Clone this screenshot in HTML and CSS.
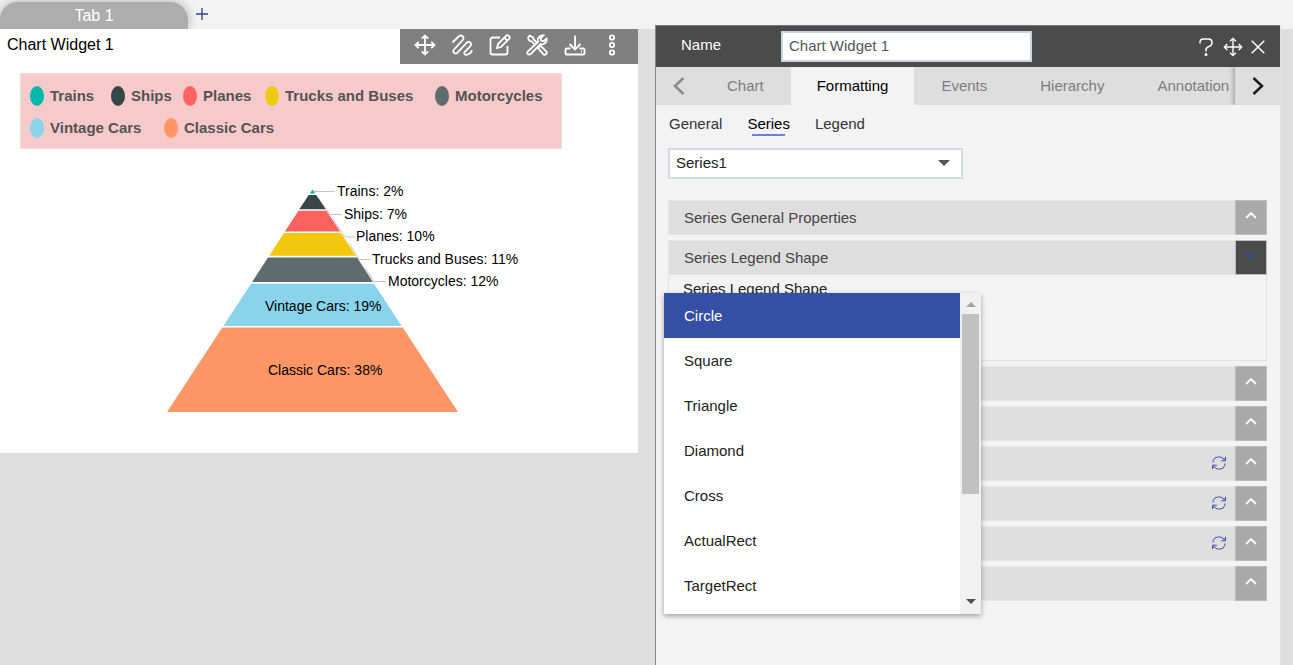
FILE: index.html
```html
<!DOCTYPE html>
<html lang="en">
<head>
<meta charset="utf-8">
<meta name="viewport" content="width=device-width, initial-scale=1">
<title>Chart Widget 1</title>
<link rel="stylesheet" href="styles.css">
</head>
<body>
<svg class="sprite" aria-hidden="true">
  <symbol id="i-move" viewBox="0 0 22 22"><path d="M11 1.500v19M1.500 11h19M7.800 4.700L11 1.500l3.200 3.200M7.800 17.300l3.200 3.200 3.200-3.200M4.700 7.800L1.500 11l3.200 3.200M17.300 7.800l3.200 3.200-3.200 3.200"/></symbol>
  <symbol id="i-up" viewBox="0 0 12 7"><path d="M1 6l5-5 5 5"/></symbol>
  <symbol id="i-down" viewBox="0 0 12 7"><path d="M1 1l5 5 5-5"/></symbol>
  <symbol id="i-sync" viewBox="0 0 16 16"><path d="M2.200 7.500V5.500Q3 2 7.500 1.800Q11.500 1.500 13.500 5M14.500 1.800v4h-4.300M14 4.300l-2.500-1M13.800 8.500v2Q13 14 8.500 14.200Q4.500 14.500 2.500 11M1.500 14.200v-4h4.300M2 11.700l2.500 1"/></symbol>
</svg>

<header class="tabbar">
  <button class="page-tab" type="button">Tab 1</button>
  <button class="add-tab" type="button" aria-label="Add tab"><svg viewBox="0 0 12 12"><path d="M6 0v12M0 6h12"/></svg></button>
</header>

<main class="workspace">
  <section class="widget">
    <div class="widget-head">
      <h1 class="widget-title">Chart Widget 1</h1>
      <div class="toolbar">
        <button type="button" aria-label="Move"><svg><use href="#i-move"/></svg></button>
        <button type="button" aria-label="Sketch"><svg viewBox="0 0 22 22"><path d="M1.500 8.500L7.500 2.500c3-2.500 6.500.5 4.200 3.500L3 15.500c-2 2.600 1 5.500 3.500 3.200L15.500 9c2.600-2.600 6 .3 3.700 3.300l-5.400 5.500c-1.500 2.200.7 3.700 2.700 2.700 2.500-1 4.500-2 4.200-4.500"/></svg></button>
        <button type="button" aria-label="Edit"><svg viewBox="0 0 22 22"><path d="M11 3.500H3.500a2 2 0 0 0-2 2v13a2 2 0 0 0 2 2h13a2 2 0 0 0 2-2V12M8 14l1-4 8.300-8.300a1.500 1.500 0 0 1 2.200 0l.8.800a1.500 1.500 0 0 1 0 2.200L12 13zM15.500 3.800l2.800 2.800"/></svg></button>
        <button type="button" aria-label="Tools"><svg viewBox="0 0 22 22"><path d="M1.800 3.600l2-2 3.200 1.700.7 2.200 3.300 3.300M9 11L5.700 7.500l-2.200-.7-1.700-3.200M12 14l2.400-2.400 5.600 5.600a2 2 0 0 1-2.800 2.900zM17.500 1.500a4.600 4.600 0 0 0-5.300 6.200L1.900 17.400a1.900 1.900 0 0 0 2.700 2.700l9.900-10a4.600 4.600 0 0 0 6-5.500l-2.600 2.600-2.700-.7-.6-2.500z"/></svg></button>
        <button type="button" aria-label="Download"><svg viewBox="0 0 22 22"><path d="M11 1.500v14M5.500 10l5.500 5.500 5.500-5.500M6.500 14.500H2.800A1.300 1.300 0 0 0 1.500 15.800v3.400a1.300 1.300 0 0 0 1.300 1.300h16.400a1.300 1.300 0 0 0 1.300-1.300v-3.400a1.300 1.300 0 0 0-1.300-1.300h-3.700M17 17.500h1"/></svg></button>
        <button type="button" aria-label="More"><svg viewBox="0 0 22 22"><circle cx="11" cy="3.500" r="2.200"/><circle cx="11" cy="11" r="2.200"/><circle cx="11" cy="18.500" r="2.200"/></svg></button>
      </div>
    </div>
    <div class="legend">
      <ul class="legend-row legend-row-five">
        <li class="trains">Trains</li>
        <li class="ships">Ships</li>
        <li class="planes">Planes</li>
        <li class="trucks">Trucks and Buses</li>
        <li class="motorcycles">Motorcycles</li>
      </ul>
      <ul class="legend-row legend-row-two">
        <li class="vintage">Vintage Cars</li>
        <li class="classic">Classic Cars</li>
      </ul>
    </div>
    <svg class="pyramid" viewBox="0 149 638 304" role="img" aria-label="Sales share by product line">
      <g class="leaders">
        <path d="M314 191.500h21M318 198l12 16.500h12M333 219l12 18h10M349 243l10 16.500h11M365 268l9 13.500h12"/>
      </g>
      <g>
        <path class="trains" d="M312.500 189.500l2.700 4h-5.400z"/>
        <path class="ships" d="M308.800 195h7.400l9.500 14.300h-26.400z"/>
        <path class="planes" d="M298.500 210.700h28l13.600 20.800h-55.200z"/>
        <path class="trucks" d="M284 233h57l14.800 22.700h-86.600z"/>
        <path class="motorcycles" d="M268 257.500h89l15.900 24.500h-120.800z"/>
        <path class="vintage" d="M251 283.700h123l27.700 42.300h-178.400z"/>
        <path class="classic" d="M222.300 327.500h180.400l55.300 84.500h-291z"/>
      </g>
      <g class="labels">
        <text x="337" y="196">Trains: 2%</text>
        <text x="344" y="219">Ships: 7%</text>
        <text x="356" y="241">Planes: 10%</text>
        <text x="372" y="264">Trucks and Buses: 11%</text>
        <text x="388" y="286">Motorcycles: 12%</text>
        <text x="265" y="311">Vintage Cars: 19%</text>
        <text x="268" y="375">Classic Cars: 38%</text>
      </g>
    </svg>
  </section>

  <aside class="panel">
    <div class="panel-head">
      <label class="name-label" for="widget-name">Name</label>
      <input class="name-input" id="widget-name" type="text" value="Chart Widget 1">
      <div class="panel-actions">
        <button type="button" aria-label="Help"><svg class="icon-help" viewBox="0 0 14 18"><path d="M1 5.500V4.500Q1 1 4.500 1h5Q13 1 13 4.500Q13 7.500 10 8.500Q7 9.500 7 12v1.500"/><circle cx="7" cy="16.500" r=".8"/></svg></button>
        <button type="button" aria-label="Move panel"><svg class="icon-move"><use href="#i-move"/></svg></button>
        <button type="button" aria-label="Close"><svg class="icon-close" viewBox="0 0 14 14"><path d="M.7.7l12.600 12.600M13.300.7L.7 13.300"/></svg></button>
      </div>
    </div>
    <nav class="section-tabs">
      <button class="prev" type="button" aria-label="Previous"><svg viewBox="0 0 12 18"><path d="M10.500 1L2 9l8.500 8"/></svg></button>
      <div class="section-list">
        <button type="button">Chart</button>
        <button class="active" type="button">Formatting</button>
        <button type="button">Events</button>
        <button type="button">Hierarchy</button>
        <button type="button">Annotation</button>
      </div>
      <button class="next" type="button" aria-label="Next"><svg viewBox="0 0 12 18"><path d="M1.500 1L10 9l-8.500 8"/></svg></button>
    </nav>
    <div class="panel-body">
      <nav class="sub-tabs">
        <button type="button">General</button>
        <button class="active" type="button">Series</button>
        <button type="button">Legend</button>
      </nav>
      <div class="series-picker">
        <select aria-label="Series"><option>Series1</option></select>
      </div>
      <div class="accordion">
        <div class="row"><span class="row-title">Series General Properties</span><button class="toggle" type="button" aria-label="Expand general properties"><svg><use href="#i-up"/></svg></button></div>
        <div class="group">
          <div class="row"><span class="row-title">Series Legend Shape</span><button class="toggle open" type="button" aria-label="Collapse legend shape"><svg><use href="#i-down"/></svg></button></div>
          <div class="group-body">
            <span class="field-label" id="shape-label">Series Legend Shape</span>
            <div class="dropdown">
              <ul class="options" role="listbox" aria-labelledby="shape-label">
                <li role="option" aria-selected="true">Circle</li>
                <li role="option">Square</li>
                <li role="option">Triangle</li>
                <li role="option">Diamond</li>
                <li role="option">Cross</li>
                <li role="option">ActualRect</li>
                <li role="option">TargetRect</li>
              </ul>
              <div class="scrollbar"><span class="arrow-up"></span><span class="thumb"></span><span class="arrow-down"></span></div>
            </div>
          </div>
        </div>
        <div class="row"><button class="toggle" type="button" aria-label="Expand section 3"><svg><use href="#i-up"/></svg></button></div>
        <div class="row"><button class="toggle" type="button" aria-label="Expand section 4"><svg><use href="#i-up"/></svg></button></div>
        <div class="row"><button class="reset" type="button" aria-label="Reset section 5"><svg><use href="#i-sync"/></svg></button><button class="toggle" type="button" aria-label="Expand section 5"><svg><use href="#i-up"/></svg></button></div>
        <div class="row"><button class="reset" type="button" aria-label="Reset section 6"><svg><use href="#i-sync"/></svg></button><button class="toggle" type="button" aria-label="Expand section 6"><svg><use href="#i-up"/></svg></button></div>
        <div class="row"><button class="reset" type="button" aria-label="Reset section 7"><svg><use href="#i-sync"/></svg></button><button class="toggle" type="button" aria-label="Expand section 7"><svg><use href="#i-up"/></svg></button></div>
        <div class="row"><button class="toggle" type="button" aria-label="Expand section 8"><svg><use href="#i-up"/></svg></button></div>
      </div>
    </div>
  </aside>
</main>
</body>
</html>
```
FILE: styles.css
```css
* {
  box-sizing: border-box;
}

body {
  margin: 0;
  min-height: 100vh;
  display: flex;
  flex-direction: column;
  background: #dedede;
  color: #000;
  font: 15px/20px "Liberation Sans", Arial, sans-serif;
}

button,
input,
select {
  font: inherit;
  color: inherit;
}

button {
  display: flex;
  align-items: center;
  justify-content: center;
  padding: 0;
  border: 0;
  background: none;
}

ul {
  margin: 0;
  padding: 0;
  list-style: none;
}

svg {
  fill: none;
  stroke: currentColor;
}

.sprite {
  display: none;
}

/* Page tabs */
.tabbar {
  display: flex;
  height: 29px;
  padding-top: 2px;
  overflow: hidden;
  background: #f3f3f3;
}

.page-tab {
  width: 188px;
  border-radius: 18px 18px 0 0;
  background: #adadad;
  box-shadow: 0 0 12px rgba(0, 0, 0, 0.3);
  color: #fff;
  font-size: 16px;
}

.add-tab {
  width: 28px;
  height: 24px;
  color: #2c4878;
}

.add-tab svg {
  width: 12px;
  height: 12px;
  stroke-width: 1.3;
}

.workspace {
  flex: 1;
  display: grid;
  grid-template-columns: minmax(0, 638fr) minmax(0, 626fr);
  column-gap: 17px;
  padding-right: 12px;
}

/* Chart widget */
.widget {
  align-self: start;
  background: #fff;
}

.widget-head {
  display: flex;
  justify-content: space-between;
}

.widget-title {
  margin: 0;
  padding: 6px 7px;
  font-size: 16px;
  font-weight: 400;
}

.toolbar {
  display: grid;
  grid-template-columns: repeat(6, 1fr);
  width: 238px;
  height: 35px;
  padding: 0 7px 3px 6px;
  background: #808080;
  color: #fff;
}

.toolbar svg {
  width: 22px;
  height: 22px;
  stroke-width: 1.8;
}

.legend {
  width: 542px;
  max-width: 90%;
  margin: 9px 20px 0;
  padding: 6px 9px 4px;
  border: 1px solid #f8d8da;
  background: #f6c9cb;
  color: #545454;
  font-weight: 700;
}

.legend-row {
  display: grid;
}

.legend-row-five {
  grid-template-columns: 81px 72px 82px 170px 1fr;
}

.legend-row-two {
  grid-template-columns: 134px 1fr;
}

.legend li {
  display: flex;
  align-items: center;
  gap: 6px;
  height: 32px;
  white-space: nowrap;
}

.legend li::before {
  content: "";
  width: 14px;
  height: 20px;
  border-radius: 50%;
  background: var(--series);
}

.trains { --series: #01b8aa; }
.ships { --series: #374649; }
.planes { --series: #fd625e; }
.trucks { --series: #f2c80f; }
.motorcycles { --series: #5f6b6d; }
.vintage { --series: #8ad4eb; }
.classic { --series: #fe9666; }

.pyramid {
  display: block;
  width: 100%;
  stroke: none;
}

.pyramid path {
  fill: var(--series);
}

.pyramid .leaders path {
  fill: none;
  stroke: #c4c4c4;
}

.labels {
  fill: #000;
  font-size: 14px;
}

/* Properties panel */
.panel {
  position: relative;
  margin-top: -4px;
  border-left: 1px solid #858585;
  border-right: 1px solid #e4e4e4;
  background: #f3f3f3;
}

.panel-head {
  display: flex;
  align-items: center;
  height: 42px;
  padding: 0 15px 0 25px;
  border-top: 1px solid #777;
  background: #4b4b4b;
  color: #fff;
}

.name-label {
  width: 100px;
  padding-bottom: 4px;
}

.name-input {
  width: 251px;
  height: 31px;
  padding: 0 6px 2px;
  border: 2px solid #ced4df;
  border-radius: 0;
  background: #fff;
  color: #555;
}

.panel-actions {
  display: flex;
  align-items: center;
  gap: 8px;
  margin-left: auto;
}

.icon-help {
  width: 14px;
  height: 18px;
  margin-right: 2px;
}

.icon-move {
  width: 20px;
  height: 20px;
}

.icon-close {
  width: 14px;
  height: 14px;
}

.panel-actions svg {
  stroke-width: 1.5;
}

.section-tabs {
  display: flex;
  height: 38px;
  background: #dedede;
}

.section-tabs svg {
  width: 12px;
  height: 18px;
}

.prev {
  flex: none;
  width: 45px;
  color: #8a8a8a;
}

.prev svg {
  stroke-width: 2.5;
}

.section-list {
  flex: 1;
  display: flex;
  gap: 1px;
  min-width: 0;
  overflow: hidden;
}

.section-list button {
  flex: none;
  padding: 0 26px;
  color: #7d7d7d;
}

.section-list .active {
  background: #f3f3f3;
  color: #000;
}

.next {
  flex: none;
  width: 45px;
  background: #dedede;
  box-shadow: -2px 0 4px rgba(0, 0, 0, 0.25);
  clip-path: inset(0 0 0 -8px);
  color: #1c1c1c;
}

.next svg {
  stroke-width: 2.5;
}

.panel-body {
  padding: 9px 13px 40px 12px;
}

.sub-tabs {
  display: flex;
  gap: 25px;
  padding-left: 1px;
  color: #333;
}

.sub-tabs button {
  position: relative;
}

.sub-tabs .active {
  color: #000;
}

.sub-tabs .active::after {
  content: "";
  position: absolute;
  right: 5px;
  bottom: -2px;
  left: 5px;
  height: 2px;
  background: #6b85c4;
}

.series-picker {
  position: relative;
  width: 295px;
  margin-top: 14px;
}

.series-picker select {
  display: block;
  appearance: none;
  width: 100%;
  height: 31px;
  padding: 0 6px 2px;
  border: 2px solid #d5dbe9;
  border-radius: 0;
  background: #fff;
  color: #222;
}

.series-picker::after {
  content: "";
  position: absolute;
  top: 12px;
  right: 13px;
  border: 6px solid transparent;
  border-top-color: #555;
  border-bottom: 0;
}

.accordion {
  display: flex;
  flex-direction: column;
  gap: 5px;
  margin-top: 21px;
}

.row {
  display: flex;
  justify-content: flex-end;
  height: 35px;
  border: 1px solid #e6e6e6;
  border-right: 0;
  background: #dedede;
}

.row-title {
  flex: 1;
  padding: 7px 15px;
  color: #444;
}

.toggle {
  width: 32px;
  height: 35px;
  margin: -1px 0;
  padding-bottom: 4px;
  border: 1px solid #bdbdbd;
  background: #a9a9a9;
  color: #fff;
}

.toggle.open {
  background: #4b4b4b;
  color: #344fa3;
}

.toggle svg {
  width: 12px;
  height: 7px;
  stroke-width: 1.8;
}

.reset {
  width: 32px;
  padding-bottom: 1px;
  color: #3f55a5;
}

.reset svg {
  width: 16px;
  height: 16px;
}

.group-body {
  position: relative;
  height: 86px;
  padding: 4px 14px;
  border: 1px solid #e2e2e2;
  border-top: 0;
}

.field-label {
  color: #222;
}

.dropdown {
  position: absolute;
  top: 18px;
  left: -5px;
  z-index: 2;
  display: flex;
  width: 317px;
  height: 321px;
  overflow: hidden;
  background: #fff;
  box-shadow: 0 2px 5px rgba(0, 0, 0, 0.35);
}

.options {
  flex: 1;
  color: #222;
}

.options li {
  height: 45px;
  padding: 0 20px;
  line-height: 45px;
}

.options [aria-selected="true"] {
  background: #344fa3;
  color: #fff;
}

.scrollbar {
  display: flex;
  flex-direction: column;
  align-items: center;
  width: 21px;
  padding: 9px 2px 10px;
  background: #f1f1f1;
}

.arrow-up {
  border: 5px solid transparent;
  border-top: 0;
  border-bottom-color: #a3a3a3;
}

.thumb {
  width: 17px;
  height: 180px;
  margin-top: 7px;
  background: #c1c1c1;
}

.arrow-down {
  margin-top: auto;
  border: 5px solid transparent;
  border-bottom: 0;
  border-top-color: #505050;
}
```
